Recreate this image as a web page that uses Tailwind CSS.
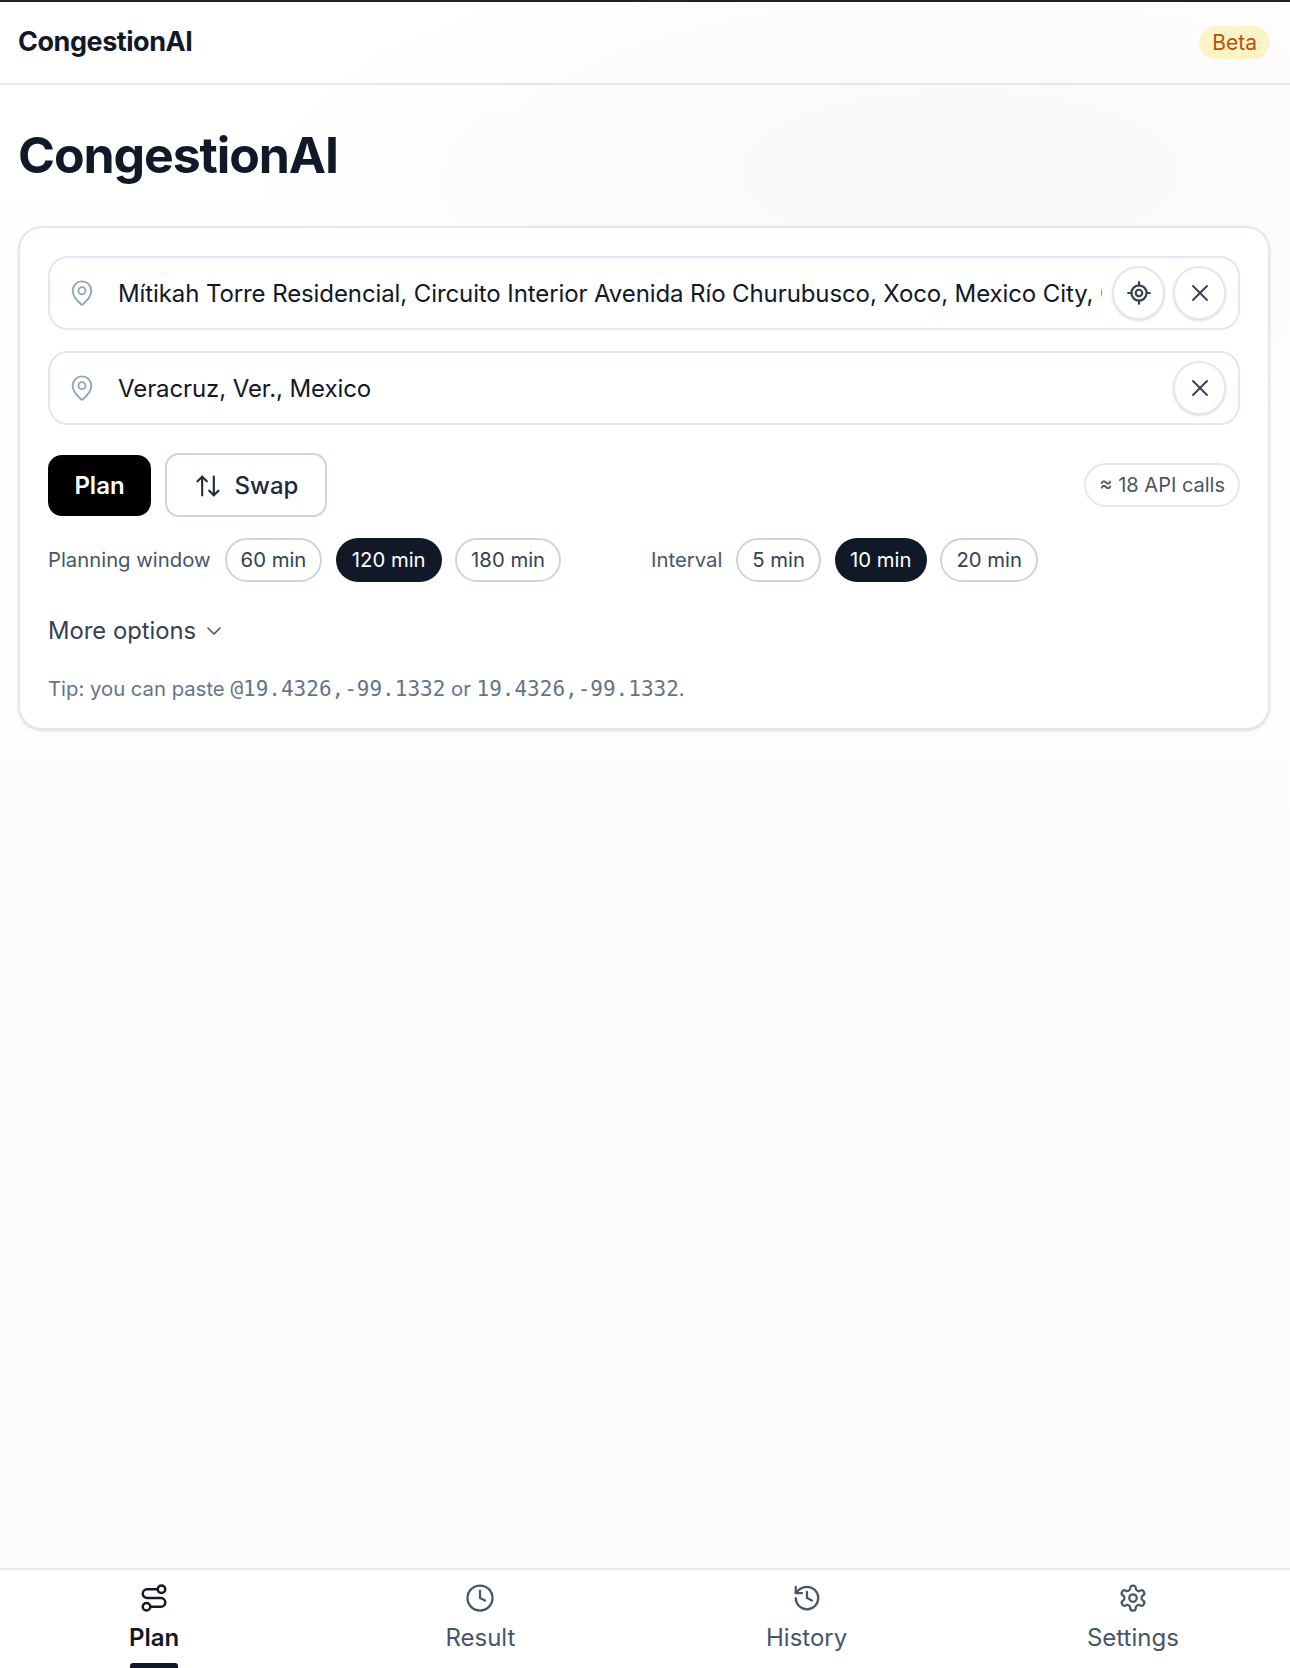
<!DOCTYPE html>
<html lang="en">
  <head>
    <script src="https://cdn.jsdelivr.net/npm/@tailwindcss/browser@4"></script>
    <meta charset="UTF-8" />
    <meta name="viewport" content="width=device-width, initial-scale=1.0" />
    <title>CongestionAI</title>
  </head>
  <body class="h-screen w-screen overflow-hidden font-['Inter',sans-serif] text-[#111827] bg-[#fafbfd]">
    <div class="relative flex h-[1668px] flex-col overflow-hidden border-t-2 border-[#222222] bg-[radial-gradient(ellipse_700px_260px_at_960px_170px,#f7f8f9,transparent),linear-gradient(180deg,#ffffff_0px,#fefefe_350px,#fafbfd_1300px)]">
      <header class="flex h-[83px] shrink-0 items-center justify-between border-b-2 border-[#e5e7eb] pr-[20px] pl-[18px]">
        <span class="text-[27px] font-bold tracking-[-0.47px] text-[#111827]">CongestionAI</span>
        <span class="flex h-[33px] items-center rounded-full bg-[#fef3c7] px-[13px] text-[21px] text-[#b45309]">Beta</span>
      </header>

      <main class="flex-1 pr-[20px] pl-[18px]">
        <h1 class="mt-[38px] text-[50px] leading-[64px] font-bold tracking-[-1.1px] text-[#111827]">CongestionAI</h1>

        <section class="mt-[39px] h-[504px] rounded-[24px] border-2 border-[#e2e8f0] bg-white px-[28px] pt-[28px] shadow-sm">
          <div class="flex h-[74px] items-center rounded-[20px] border-2 border-[#e2e8f0] bg-white pr-[12px] pl-[18px]">
            <svg class="h-[28px] w-[28px] shrink-0 text-[#94a3b8]" viewBox="0 0 24 24" fill="none" stroke="currentColor" stroke-width="1.6" stroke-linecap="round" stroke-linejoin="round"><path d="M20 10c0 4.993-5.539 10.193-7.399 11.799a1 1 0 0 1-1.202 0C9.539 20.193 4 14.993 4 10a8 8 0 0 1 16 0" /><circle cx="12" cy="10" r="3" /></svg>
            <div class="ml-[22px] flex-1 overflow-hidden pt-[2px] text-[24px] tracking-[-0.1px] whitespace-nowrap">Mítikah Torre Residencial, Circuito Interior Avenida Río Churubusco, Xoco, Mexico City, CDMX, Mexico</div>
            <button class="ml-[10px] flex h-[54px] w-[53px] shrink-0 items-center justify-center rounded-full border-2 border-[#e2e8f0] bg-white text-[#334155] shadow-sm">
              <svg class="h-[26px] w-[26px]" viewBox="0 0 24 24" fill="none" stroke="currentColor" stroke-width="2" stroke-linecap="round" stroke-linejoin="round"><line x1="2" x2="5" y1="12" y2="12" /><line x1="19" x2="22" y1="12" y2="12" /><line x1="12" x2="12" y1="2" y2="5" /><line x1="12" x2="12" y1="19" y2="22" /><circle cx="12" cy="12" r="7" /><circle cx="12" cy="12" r="3" /></svg>
            </button>
            <button class="ml-[8px] flex h-[54px] w-[53px] shrink-0 items-center justify-center rounded-full border-2 border-[#e2e8f0] bg-white text-[#334155] shadow-sm">
              <svg class="h-[28px] w-[28px]" viewBox="0 0 24 24" fill="none" stroke="currentColor" stroke-width="1.6" stroke-linecap="round" stroke-linejoin="round"><path d="M18 6 6 18" /><path d="m6 6 12 12" /></svg>
            </button>
          </div>

          <div class="mt-[21px] flex h-[74px] items-center rounded-[20px] border-2 border-[#e2e8f0] bg-white pr-[12px] pl-[18px]">
            <svg class="h-[28px] w-[28px] shrink-0 text-[#94a3b8]" viewBox="0 0 24 24" fill="none" stroke="currentColor" stroke-width="1.6" stroke-linecap="round" stroke-linejoin="round"><path d="M20 10c0 4.993-5.539 10.193-7.399 11.799a1 1 0 0 1-1.202 0C9.539 20.193 4 14.993 4 10a8 8 0 0 1 16 0" /><circle cx="12" cy="10" r="3" /></svg>
            <div class="ml-[22px] flex-1 overflow-hidden pt-[2px] text-[24px] tracking-[-0.1px] whitespace-nowrap">Veracruz, Ver., Mexico</div>
            <button class="ml-[8px] flex h-[54px] w-[53px] shrink-0 items-center justify-center rounded-full border-2 border-[#e2e8f0] bg-white text-[#334155] shadow-sm">
              <svg class="h-[28px] w-[28px]" viewBox="0 0 24 24" fill="none" stroke="currentColor" stroke-width="1.6" stroke-linecap="round" stroke-linejoin="round"><path d="M18 6 6 18" /><path d="m6 6 12 12" /></svg>
            </button>
          </div>

          <div class="mt-[28px] flex h-[64px] items-center justify-between">
            <div class="flex items-center gap-[14px]">
              <button class="h-[61px] w-[103px] rounded-[14px] bg-black pt-[2px] text-[24px] font-semibold text-white">Plan</button>
              <button class="flex h-[64px] w-[162px] items-center justify-center gap-[13px] rounded-[14px] border-2 border-[#cbd5e1] bg-white pt-[2px] text-[24px] font-medium text-[#1f2937]">
                <svg class="h-[28px] w-[28px]" viewBox="0 0 24 24" fill="none" stroke="currentColor" stroke-width="1.8" stroke-linecap="round" stroke-linejoin="round"><path d="m21 16-4 4-4-4" /><path d="M17 20V4" /><path d="m3 8 4-4 4 4" /><path d="M7 4v16" /></svg>
                Swap
              </button>
            </div>
            <span class="flex h-[44px] items-center rounded-full border-2 border-[#e5e7eb] bg-white px-[13px] text-[20px] text-[#475569]">≈ 18 API calls</span>
          </div>

          <div class="mt-[21px] flex h-[44px] items-center text-[20.3px] text-[#334155]">
            <span class="mr-[14px] text-[#475569]">Planning window</span>
            <div class="flex gap-[13.5px]">
              <span class="flex h-[44px] items-center rounded-full border-2 border-[#cbd5e1] bg-white px-[14px]">60 min</span>
              <span class="flex h-[44px] items-center rounded-full bg-[#111827] px-[16px] text-white">120 min</span>
              <span class="flex h-[44px] items-center rounded-full border-2 border-[#cbd5e1] bg-white px-[14px]">180 min</span>
            </div>
            <span class="mr-[14px] ml-[90px] text-[#475569]">Interval</span>
            <div class="flex gap-[13.5px]">
              <span class="flex h-[44px] items-center rounded-full border-2 border-[#cbd5e1] bg-white px-[14px]">5 min</span>
              <span class="flex h-[44px] items-center rounded-full bg-[#111827] px-[15.5px] text-white">10 min</span>
              <span class="flex h-[44px] items-center rounded-full border-2 border-[#cbd5e1] bg-white px-[14px]">20 min</span>
            </div>
          </div>

          <div class="mt-[33px] flex items-center gap-[6px] text-[23.8px] leading-[32px] text-[#374151]">
            More options
            <svg class="h-[24px] w-[24px] text-[#475569]" viewBox="0 0 24 24" fill="none" stroke="currentColor" stroke-width="1.6" stroke-linecap="round" stroke-linejoin="round"><path d="m6 9 6 6 6-6" /></svg>
          </div>

          <p class="mt-[28px] text-[20.3px] leading-[28px] text-[#64748b]">Tip: you can paste <code class="font-['DejaVu_Sans_Mono',monospace] text-[21px]">@19.4326,-99.1332</code> or <code class="font-['DejaVu_Sans_Mono',monospace] text-[21px]">19.4326,-99.1332</code>.</p>
        </section>
      </main>

      <nav class="relative h-[100px] shrink-0 overflow-hidden border-t-2 border-[#e5e7eb] bg-white">
        <div class="-ml-[9px] grid w-[1305px] grid-cols-4 pt-[13px]">
          <a class="flex flex-col items-center text-[#111827]">
            <svg class="h-[30px] w-[30px]" viewBox="0 0 24 24" fill="none" stroke="currentColor" stroke-width="2" stroke-linecap="round" stroke-linejoin="round"><circle cx="6" cy="19" r="3" /><path d="M9 19h8.5a3.5 3.5 0 0 0 0-7h-11a3.5 3.5 0 0 1 0-7H15" /><circle cx="18" cy="5" r="3" /></svg>
            <span class="mt-[9px] text-[24px] leading-[32px] font-semibold">Plan</span>
            <span class="absolute bottom-0 h-[5px] w-[48px] rounded-t-[3px] bg-[#111827]"></span>
          </a>
          <a class="flex flex-col items-center text-[#475569]">
            <svg class="h-[30px] w-[30px]" viewBox="0 0 24 24" fill="none" stroke="currentColor" stroke-width="1.8" stroke-linecap="round" stroke-linejoin="round"><circle cx="12" cy="12" r="10" /><polyline points="12 6 12 12 16 14" /></svg>
            <span class="mt-[9px] text-[24px] leading-[32px]">Result</span>
          </a>
          <a class="flex flex-col items-center text-[#475569]">
            <svg class="h-[30px] w-[30px]" viewBox="0 0 24 24" fill="none" stroke="currentColor" stroke-width="1.8" stroke-linecap="round" stroke-linejoin="round"><path d="M3 12a9 9 0 1 0 9-9 9.75 9.75 0 0 0-6.74 2.74L3 8" /><path d="M3 3v5h5" /><path d="M12 7v5l4 2" /></svg>
            <span class="mt-[9px] text-[24px] leading-[32px]">History</span>
          </a>
          <a class="flex flex-col items-center text-[#475569]">
            <svg class="h-[30px] w-[30px]" viewBox="0 0 24 24" fill="none" stroke="currentColor" stroke-width="1.8" stroke-linecap="round" stroke-linejoin="round"><path d="M12.22 2h-.44a2 2 0 0 0-2 2v.18a2 2 0 0 1-1 1.73l-.43.25a2 2 0 0 1-2 0l-.15-.08a2 2 0 0 0-2.73.73l-.22.38a2 2 0 0 0 .73 2.73l.15.1a2 2 0 0 1 1 1.72v.51a2 2 0 0 1-1 1.74l-.15.09a2 2 0 0 0-.73 2.73l.22.38a2 2 0 0 0 2.73.73l.15-.08a2 2 0 0 1 2 0l.43.25a2 2 0 0 1 1 1.73V20a2 2 0 0 0 2 2h.44a2 2 0 0 0 2-2v-.18a2 2 0 0 1 1-1.73l.43-.25a2 2 0 0 1 2 0l.15.08a2 2 0 0 0 2.73-.73l.22-.39a2 2 0 0 0-.73-2.73l-.15-.08a2 2 0 0 1-1-1.74v-.5a2 2 0 0 1 1-1.74l.15-.09a2 2 0 0 0 .73-2.73l-.22-.38a2 2 0 0 0-2.73-.73l-.15.08a2 2 0 0 1-2 0l-.43-.25a2 2 0 0 1-1-1.73V4a2 2 0 0 0-2-2z" /><circle cx="12" cy="12" r="3" /></svg>
            <span class="mt-[9px] text-[24px] leading-[32px]">Settings</span>
          </a>
        </div>
      </nav>
    </div>
  </body>
</html>
